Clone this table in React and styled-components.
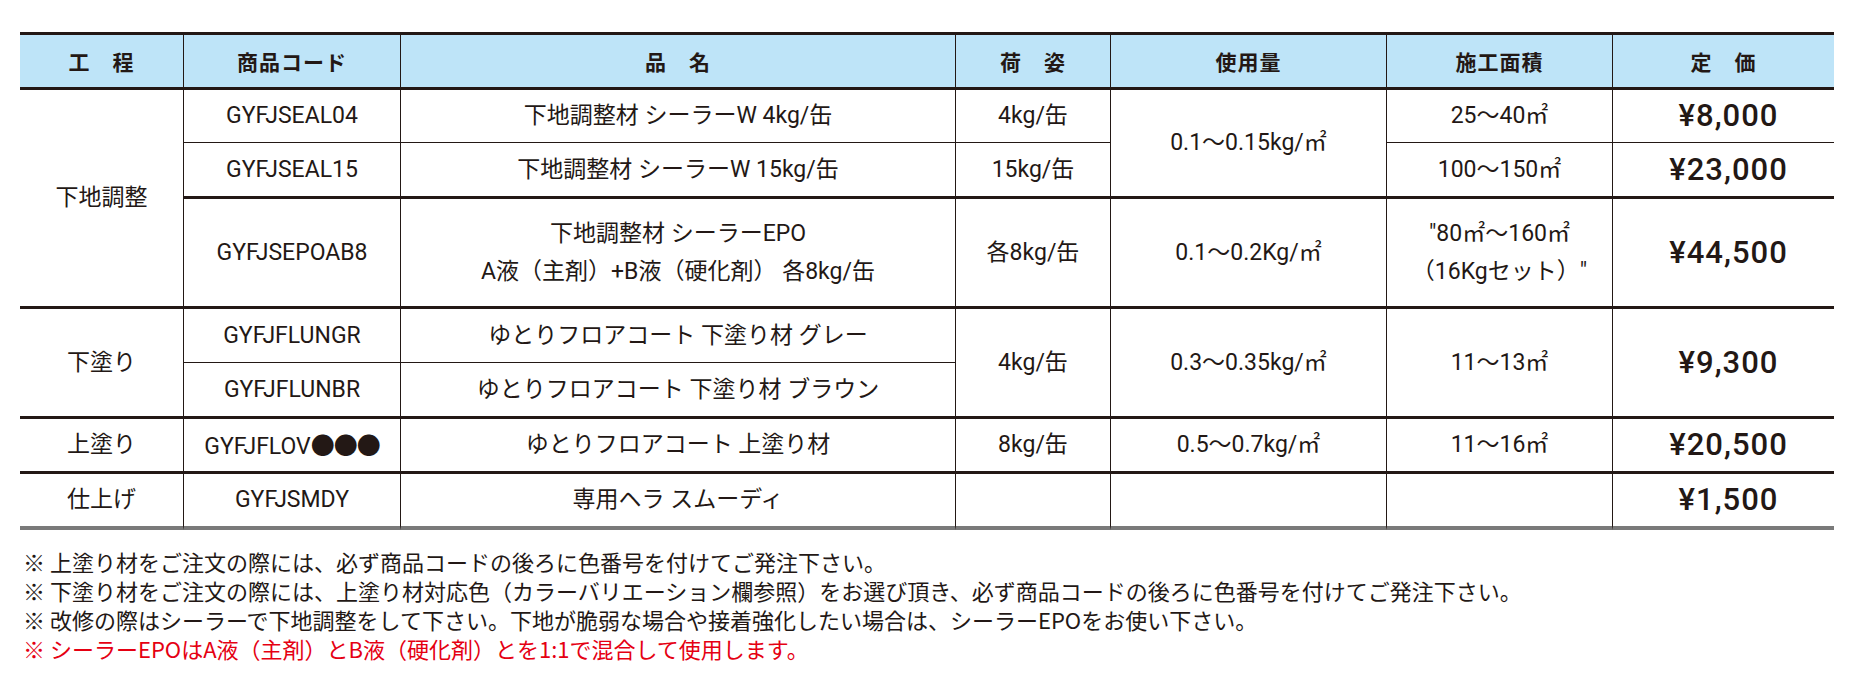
import React from 'react';
import styled, { createGlobalStyle } from 'styled-components';

const ink = '#231815';

const GlobalStyle = createGlobalStyle`
  html, body {
    margin: 0;
    padding: 0;
    background: #ffffff;
  }
  body {
    font-family: 'Noto Sans CJK JP', 'Noto Sans', sans-serif;
    color: ${ink};
  }
`;

const borders = {
  none: 'none',
  thin: `1px solid ${ink}`,
  thick: `3px solid ${ink}`,
  gray: '4px solid #7a7a7a',
};

const Page = styled.div`
  width: 1862px;
  padding: 32px 0 0 20px;
  box-sizing: border-box;
`;

const Grid = styled.div`
  display: grid;
  grid-template-columns: 163px 217px 555px 155px 276px 226px 222px;
  grid-template-rows: 55px 53px 56px 110px 54px 56px 55px 56px;
  width: 1814px;
  border-top: 3px solid ${ink};
`;

const Cell = styled.div`
  grid-row: span ${({ $span }) => $span || 1};
  display: flex;
  flex-direction: column;
  align-items: center;
  justify-content: center;
  box-sizing: border-box;
  border-left: ${({ $first }) => ($first ? 'none' : borders.thin)};
  border-bottom: ${({ $b }) => borders[$b || 'thin']};
  font-family: Roboto, 'Noto Sans CJK JP', sans-serif;
  font-size: 23px;
  line-height: 38px;
  text-align: center;
  white-space: nowrap;
`;

const HeadCell = styled(Cell)`
  background: #bee4f8;
  font-family: 'Noto Sans CJK JP', sans-serif;
  font-weight: 700;
  font-size: 21px;
  letter-spacing: 1px;
`;

const Price = styled(Cell)`
  font-family: Roboto, 'Liberation Sans', sans-serif;
  font-weight: 500;
  font-size: 31px;
  letter-spacing: 1px;
  padding-left: 10px;
`;

const Dots = styled.span`
  font-family: 'Noto Sans CJK JP', sans-serif;
  font-size: 24px;
  letter-spacing: -1px;
`;

const Notes = styled.div`
  margin-top: 17px;
  padding-left: 3px;
  font-size: 22px;
  line-height: 29px;
`;

const Note = styled.div`
  color: ${({ $red }) => ($red ? '#e50012' : ink)};
  white-space: nowrap;
`;

const heads = ['工　程', '商品コード', '品　名', '荷　姿', '使用量', '施工面積', '定　価'];

const notes = [
  '※ 上塗り材をご注文の際には、必ず商品コードの後ろに色番号を付けてご発注下さい。',
  '※ 下塗り材をご注文の際には、上塗り材対応色（カラーバリエーション欄参照）をお選び頂き、必ず商品コードの後ろに色番号を付けてご発注下さい。',
  '※ 改修の際はシーラーで下地調整をして下さい。下地が脆弱な場合や接着強化したい場合は、シーラーEPOをお使い下さい。',
];

export default function App() {
  return (
    <Page>
      <GlobalStyle />
      <Grid>
        {heads.map((h, i) => (
          <HeadCell key={h} $first={i === 0} $b="thick">
            {h}
          </HeadCell>
        ))}

        {/* 下地調整 */}
        <Cell $first $span={3} $b="thick">下地調整</Cell>
        <Cell>GYFJSEAL04</Cell>
        <Cell>下地調整材 シーラーW 4kg/缶</Cell>
        <Cell>4kg/缶</Cell>
        <Cell $span={2} $b="thick">0.1～0.15kg/㎡</Cell>
        <Cell>25～40㎡</Cell>
        <Price>¥8,000</Price>

        <Cell $b="thick">GYFJSEAL15</Cell>
        <Cell $b="thick">下地調整材 シーラーW 15kg/缶</Cell>
        <Cell $b="thick">15kg/缶</Cell>
        <Cell $b="thick">100～150㎡</Cell>
        <Price $b="thick">¥23,000</Price>

        <Cell $b="thick">GYFJSEPOAB8</Cell>
        <Cell $b="thick">
          <span>下地調整材 シーラーEPO</span>
          <span>A液（主剤）+B液（硬化剤） 各8kg/缶</span>
        </Cell>
        <Cell $b="thick">各8kg/缶</Cell>
        <Cell $b="thick">0.1～0.2Kg/㎡</Cell>
        <Cell $b="thick">
          <span>"80㎡～160㎡</span>
          <span>（16Kgセット）"</span>
        </Cell>
        <Price $b="thick">¥44,500</Price>

        {/* 下塗り */}
        <Cell $first $span={2} $b="thick">下塗り</Cell>
        <Cell>GYFJFLUNGR</Cell>
        <Cell>ゆとりフロアコート 下塗り材 グレー</Cell>
        <Cell $span={2} $b="thick">4kg/缶</Cell>
        <Cell $span={2} $b="thick">0.3～0.35kg/㎡</Cell>
        <Cell $span={2} $b="thick">11～13㎡</Cell>
        <Price $span={2} $b="thick">¥9,300</Price>

        <Cell $b="thick">GYFJFLUNBR</Cell>
        <Cell $b="thick">ゆとりフロアコート 下塗り材 ブラウン</Cell>

        {/* 上塗り */}
        <Cell $first $b="thick">上塗り</Cell>
        <Cell $b="thick">
          <span>
            GYFJFLOV<Dots>●●●</Dots>
          </span>
        </Cell>
        <Cell $b="thick">ゆとりフロアコート 上塗り材</Cell>
        <Cell $b="thick">8kg/缶</Cell>
        <Cell $b="thick">0.5～0.7kg/㎡</Cell>
        <Cell $b="thick">11～16㎡</Cell>
        <Price $b="thick">¥20,500</Price>

        {/* 仕上げ */}
        <Cell $first $b="gray">仕上げ</Cell>
        <Cell $b="gray">GYFJSMDY</Cell>
        <Cell $b="gray">専用ヘラ スムーディ</Cell>
        <Cell $b="gray" />
        <Cell $b="gray" />
        <Cell $b="gray" />
        <Price $b="gray">¥1,500</Price>
      </Grid>

      <Notes>
        {notes.map((n) => (
          <Note key={n}>{n}</Note>
        ))}
        <Note $red>※ シーラーEPOはA液（主剤）とB液（硬化剤）とを1:1で混合して使用します。</Note>
      </Notes>
    </Page>
  );
}
